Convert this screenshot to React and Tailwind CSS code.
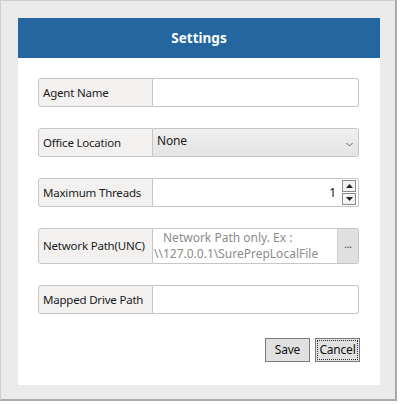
import React from 'react';

function FieldRow({ label, children, tall }) {
  return (
    <div className={`flex ${tall ? 'h-[36px]' : 'h-[29px]'}`}>
      <div className="w-[115px] shrink-0 flex items-center pl-[4px] bg-[#f2f1f0] border border-[#c6c6c6] rounded-l-[3px] text-[#1b1b1b] whitespace-nowrap">
        {label}
      </div>
      <div className="flex-1 flex border border-l-0 border-[#c6c6c6] rounded-r-[3px] bg-white overflow-hidden">
        {children}
      </div>
    </div>
  );
}

export default function App() {
  return (
    <div className="w-[400px] h-[405px] bg-white font-['Noto_Sans','Open_Sans',sans-serif] text-[11.5px] tracking-[-0.2px]">
      <div className="w-[397px] h-[401px] bg-[#ebebeb] border border-[#cfcfcf] border-r-2 border-b-2 border-r-[#a9a9a9] border-b-[#a9a9a9] pt-[17px] pl-[17px] pr-[15px] pb-[14px]">
        <div className="h-full bg-white flex flex-col">
          {/* Header */}
          <div className="h-[40px] bg-[#2366a0] flex items-center justify-center">
            <span className="text-white font-bold text-[13.5px] tracking-normal mt-[1px]">Settings</span>
          </div>

          <div className="pl-[20px] pr-[21px] pt-[20px] flex flex-col gap-[21px]">
            <FieldRow label="Agent Name">
              <input className="flex-1 outline-none px-1" />
            </FieldRow>

            <FieldRow label="Office Location">
              <div className="flex-1 flex justify-between bg-gradient-to-b from-[#efefef] to-[#e4e4e4] pl-[4px] pr-[5px] pt-[3px]">
                <span className="text-[#1b1b1b] text-[12px]">None</span>
                <svg width="7" height="5" viewBox="0 0 7 5" className="mt-[10px]">
                  <polyline points="0.5,1 3.5,4 6.5,1" fill="none" stroke="#606060" strokeWidth="1" />
                </svg>
              </div>
            </FieldRow>

            <FieldRow label="Maximum Threads">
              <div className="flex-1 flex items-center justify-end pr-[6px] text-[#111] text-[12px]">1</div>
              <div className="w-[16px] flex flex-col items-center justify-center gap-[1px] pr-[2px]">
                <div className="w-[14px] h-[12px] border border-[#8a8a8a] bg-[#f3f3f3] flex items-center justify-center">
                  <svg width="7" height="4" viewBox="0 0 7 4"><polygon points="0,4 3.5,0 7,4" fill="#222" /></svg>
                </div>
                <div className="w-[14px] h-[12px] border border-[#8a8a8a] bg-[#f3f3f3] flex items-center justify-center">
                  <svg width="7" height="4" viewBox="0 0 7 4"><polygon points="0,0 3.5,4 7,0" fill="#222" /></svg>
                </div>
              </div>
            </FieldRow>

            <FieldRow label="Network Path(UNC)" tall>
              <div className="flex-1 flex flex-col justify-center text-[#8b8b8b] text-[12px] tracking-normal leading-[16px] pl-[1px] whitespace-nowrap">
                <span className="pl-[9px]">Network Path only. Ex :</span>
                <span>\\127.0.0.1\SurePrepLocalFile</span>
              </div>
              <div className="w-[21px] bg-[#e0e0e0] border-l border-[#cfcfcf] flex items-center justify-center text-[#333] text-[10px] pb-[3px]">
                ...
              </div>
            </FieldRow>

            <FieldRow label="Mapped Drive Path">
              <input className="flex-1 outline-none px-1" />
            </FieldRow>
          </div>

          {/* Buttons */}
          <div className="flex justify-end gap-[5px] pr-[20px] mt-[24px]">
            <button className="w-[45px] h-[24px] bg-[#e1e1e1] border border-[#7a7a7a] text-[#111] text-[12px]">Save</button>
            <button className="w-[45px] h-[24px] bg-[#e1e1e1] border border-[#7a7a7a] text-[#111] text-[12px] p-[1px]">
              <div className="w-full h-full border border-dotted border-[#333] flex items-center justify-center">Cancel</div>
            </button>
          </div>
        </div>
      </div>
    </div>
  );
}
